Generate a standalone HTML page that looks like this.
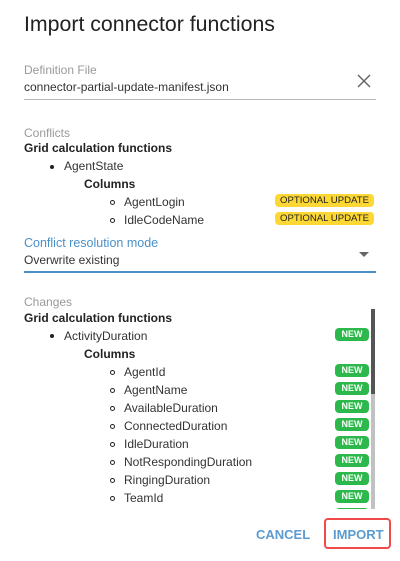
<!DOCTYPE html>
<html><head><style>
*{margin:0;padding:0;box-sizing:border-box}
body{width:400px;height:561px;background:#fff;font-family:"Liberation Sans",Arial,sans-serif;color:#222;position:relative;overflow:hidden}
.a{position:absolute;white-space:nowrap}
.t{left:24px;top:12px;font-size:21.3px;color:#222}
.lbl{font-size:12px;color:#999}
.s{font-size:12px;color:#333}
.b{font-size:12px;font-weight:bold;color:#222}
.dot{position:absolute;width:4px;height:4px;border-radius:50%;background:#222}
.ring{position:absolute;width:5px;height:5px;border-radius:50%;border:1px solid #222}
.opt{position:absolute;left:275px;width:99px;height:13px;background:#fdd835;border-radius:4px;font-size:9.6px;color:#222;text-align:center;line-height:13px}
.new{position:absolute;left:335px;width:34px;height:13px;background:#2db84b;border-radius:4px;font-size:9px;font-weight:bold;color:#fff;text-align:center;line-height:13px}
</style></head><body>
<div class="a t">Import connector functions</div>
<div class="a lbl" style="left:24px;top:63px">Definition File</div>
<div class="a s" style="left:24px;top:80px">connector-partial-update-manifest.json</div>
<svg class="a" style="left:356px;top:73px" width="16" height="16"><path d="M2 2L14 14M14 2L2 14" stroke="#666" stroke-width="1.5"/></svg>
<div class="a" style="left:24px;top:99px;width:352px;height:1px;background:#bbb"></div>

<div class="a lbl" style="left:24px;top:126px">Conflicts</div>
<div class="a b" style="left:24px;top:141px">Grid calculation functions</div>
<div class="dot" style="left:50px;top:165px"></div>
<div class="a s" style="left:64px;top:159px">AgentState</div>
<div class="a b" style="left:84px;top:177px">Columns</div>
<div class="ring" style="left:110px;top:200px"></div>
<div class="a s" style="left:124px;top:195px">AgentLogin</div>
<div class="opt" style="top:194px">OPTIONAL UPDATE</div>
<div class="ring" style="left:110px;top:218px"></div>
<div class="a s" style="left:124px;top:213px">IdleCodeName</div>
<div class="opt" style="top:212px">OPTIONAL UPDATE</div>

<div class="a" style="left:24px;top:236px;font-size:12.5px;color:#4a90c8">Conflict resolution mode</div>
<div class="a s" style="left:24px;top:253px">Overwrite existing</div>
<svg class="a" style="left:358px;top:252px" width="12" height="6"><path d="M1 0L11 0L6 5Z" fill="#666"/></svg>
<div class="a" style="left:24px;top:271px;width:352px;height:2px;background:#4a90c8"></div>

<div class="a lbl" style="left:24px;top:295px">Changes</div>
<div style="position:absolute;left:0;top:309px;width:400px;height:200px;overflow:hidden">
<div class="a b" style="left:24px;top:2px">Grid calculation functions</div>
<div class="dot" style="left:50px;top:25px"></div>
<div class="a s" style="left:64px;top:20px">ActivityDuration</div>
<div class="new" style="top:19px">NEW</div>
<div class="a b" style="left:84px;top:38px">Columns</div>
<div class="ring" style="left:110px;top:61px"></div><div class="a s" style="left:124px;top:56px">AgentId</div><div class="new" style="top:55px">NEW</div>
<div class="ring" style="left:110px;top:79px"></div><div class="a s" style="left:124px;top:74px">AgentName</div><div class="new" style="top:73px">NEW</div>
<div class="ring" style="left:110px;top:97px"></div><div class="a s" style="left:124px;top:92px">AvailableDuration</div><div class="new" style="top:91px">NEW</div>
<div class="ring" style="left:110px;top:115px"></div><div class="a s" style="left:124px;top:110px">ConnectedDuration</div><div class="new" style="top:109px">NEW</div>
<div class="ring" style="left:110px;top:133px"></div><div class="a s" style="left:124px;top:128px">IdleDuration</div><div class="new" style="top:127px">NEW</div>
<div class="ring" style="left:110px;top:151px"></div><div class="a s" style="left:124px;top:146px">NotRespondingDuration</div><div class="new" style="top:145px">NEW</div>
<div class="ring" style="left:110px;top:169px"></div><div class="a s" style="left:124px;top:164px">RingingDuration</div><div class="new" style="top:163px">NEW</div>
<div class="ring" style="left:110px;top:187px"></div><div class="a s" style="left:124px;top:182px">TeamId</div><div class="new" style="top:181px">NEW</div>
<div class="new" style="top:199px">NEW</div>
<div class="a" style="left:371px;top:0;width:4px;height:200px;background:#c1c1c1"></div>
<div class="a" style="left:371px;top:0;width:4px;height:85px;background:#555"></div>
</div>

<div class="a" style="left:256px;top:527px;font-size:13px;font-weight:bold;color:#5b9bd0">CANCEL</div>
<div class="a" style="left:324px;top:518px;width:67px;height:31px;border:2px solid #f04a4a;border-radius:4px"></div>
<div class="a" style="left:333px;top:527px;font-size:13px;font-weight:bold;color:#5b9bd0">IMPORT</div>
</body></html>
